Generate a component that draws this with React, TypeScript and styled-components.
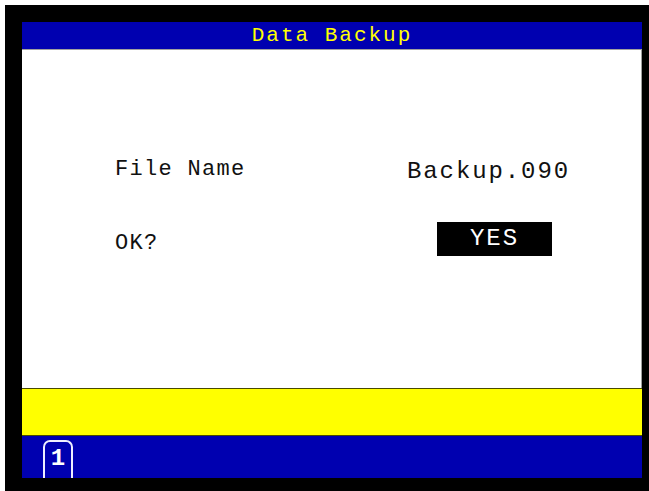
import React from 'react';
import styled, { createGlobalStyle } from 'styled-components';

const GlobalStyle = createGlobalStyle`
  body {
    margin: 0;
    background: #ffffff;
  }
`;

const MONO = `'Liberation Mono', 'DejaVu Sans Mono', monospace`;

const Screen = styled.div`
  box-sizing: border-box;
  width: 644px;
  height: 486px;
  margin: 5px 0 0 5px;
  padding: 17px 7px 13px 17px;
  background: #000000;
  display: flex;
  flex-direction: column;
`;

const TitleBar = styled.div`
  height: 27px;
  flex-shrink: 0;
  background: #0000b0;
  color: #ffff00;
  font-family: ${MONO};
  font-size: 21px;
  letter-spacing: 2px;
  line-height: 27px;
  text-align: center;
`;

const Panel = styled.div`
  flex: 1;
  box-sizing: border-box;
  background: #ffffff;
  border-top: 1px solid #a0a0a0;
  border-right: 1px solid #a0a0a0;
  padding: 104px 0 0 93px;
  display: flex;
  flex-direction: column;
  gap: 34px;
  font-family: ${MONO};
  color: #111111;
`;

const Row = styled.div`
  display: flex;
  align-items: flex-start;
`;

const Label = styled.div<{ $offset?: number }>`
  width: 292px;
  font-size: 22px;
  letter-spacing: 1.3px;
  line-height: 32px;
  margin-top: ${(p) => p.$offset || 0}px;
  white-space: pre;
`;

const Value = styled.div`
  font-size: 24px;
  letter-spacing: 1.9px;
  line-height: 32px;
  margin-top: 2px;
`;

const Choice = styled.div`
  width: 115px;
  height: 34px;
  margin-left: 30px;
  background: #000000;
  color: #ffffff;
  font-size: 24px;
  letter-spacing: 2px;
  line-height: 34px;
  text-align: center;
`;

const StatusBar = styled.div`
  height: 48px;
  flex-shrink: 0;
  box-sizing: border-box;
  background: #ffff00;
  border-top: 1px solid #4a4a00;
  border-bottom: 1px solid #4a4a00;
`;

const TabBar = styled.div`
  height: 42px;
  flex-shrink: 0;
  background: #0000b0;
  overflow: hidden;
  padding: 4px 0 0 21px;
  box-sizing: border-box;
`;

const PageTab = styled.div`
  box-sizing: border-box;
  width: 30px;
  height: 46px;
  border: 2px solid #eeeeff;
  border-bottom: none;
  border-radius: 7px 7px 0 0;
  color: #ffffff;
  font-family: ${MONO};
  font-weight: bold;
  font-size: 24px;
  line-height: 34px;
  text-align: center;
`;

function App() {
  return (
    <>
      <GlobalStyle />
      <Screen>
        <TitleBar>Data Backup</TitleBar>
        <Panel>
          <Row>
            <Label>File Name</Label>
            <Value>Backup.090</Value>
          </Row>
          <Row>
            <Label $offset={6}>OK?</Label>
            <Choice>YES</Choice>
          </Row>
        </Panel>
        <StatusBar />
        <TabBar>
          <PageTab>1</PageTab>
        </TabBar>
      </Screen>
    </>
  );
}

export default App;
